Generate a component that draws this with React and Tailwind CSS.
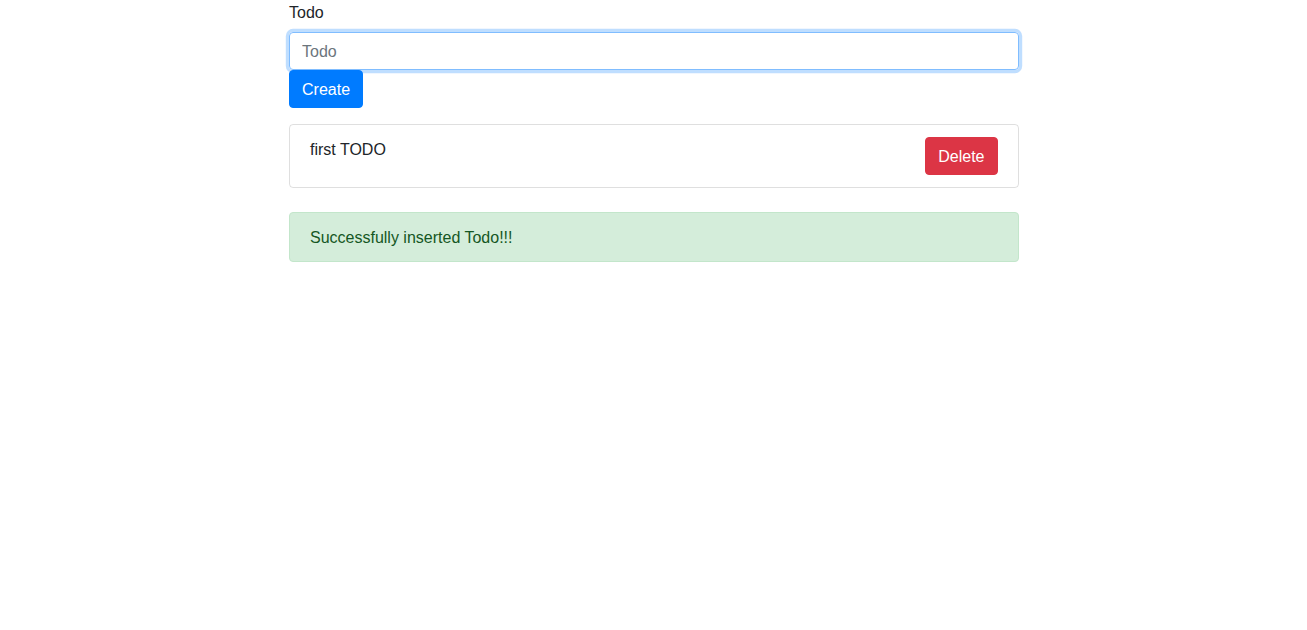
import { useState } from 'react';

export default function App() {
  const [text, setText] = useState('');
  const [todos, setTodos] = useState([{ id: 1, title: 'first TODO' }]);

  return (
    <div className="min-h-screen bg-white text-[#212529] text-base leading-6 font-['Liberation_Sans',Arial,sans-serif]">
      <div className="w-[730px] ml-[289px]">
        <label className="block pt-px mb-[7px]">Todo</label>
        <input
          autoFocus
          value={text}
          onChange={(e) => setText(e.target.value)}
          placeholder="Todo"
          className="block w-full h-[38px] px-3 pt-[7px] pb-[5px] border border-[#80bdff] rounded-[4px] outline-none shadow-[0_0_0_3.2px_rgba(0,123,255,0.25)] placeholder:text-[#6c757d] text-[#495057]"
        />
        <button className="h-[38px] px-3 pt-px bg-[#007bff] border border-[#007bff] text-white rounded-[4px]">
          Create
        </button>

        <ul className="mt-4">
          {todos.map((todo) => (
            <li
              key={todo.id}
              className="flex justify-between items-start px-5 py-3 border border-[rgba(0,0,0,0.125)] rounded-[4px]"
            >
              <span className="pt-px">{todo.title}</span>
              <button
                onClick={() => setTodos(todos.filter((t) => t.id !== todo.id))}
                className="h-[38px] px-[12.5px] pt-px bg-[#dc3545] border border-[#dc3545] text-white rounded-[4px]"
              >
                Delete
              </button>
            </li>
          ))}
        </ul>

        <div className="mt-6 px-5 pt-[13px] pb-[11px] bg-[#d4edda] border border-[#c3e6cb] text-[#155724] rounded-[4px]">
          Successfully inserted Todo!!!
        </div>
      </div>
    </div>
  );
}
